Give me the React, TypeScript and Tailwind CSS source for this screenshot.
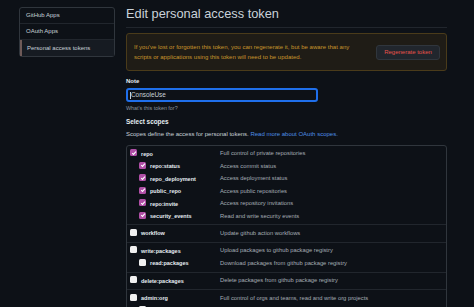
import React from "react";

type Scope = { name: string; desc: string; checked: boolean; child?: boolean };

const groups: Scope[][] = [
  [
    { name: "repo", desc: "Full control of private repositories", checked: true },
    { name: "repo:status", desc: "Access commit status", checked: true, child: true },
    { name: "repo_deployment", desc: "Access deployment status", checked: true, child: true },
    { name: "public_repo", desc: "Access public repositories", checked: true, child: true },
    { name: "repo:invite", desc: "Access repository invitations", checked: true, child: true },
    { name: "security_events", desc: "Read and write security events", checked: true, child: true },
  ],
  [{ name: "workflow", desc: "Update github action workflows", checked: false }],
  [
    { name: "write:packages", desc: "Upload packages to github package registry", checked: false },
    { name: "read:packages", desc: "Download packages from github package registry", checked: false, child: true },
  ],
  [{ name: "delete:packages", desc: "Delete packages from github package registry", checked: false }],
  [
    { name: "admin:org", desc: "Full control of orgs and teams, read and write org projects", checked: false },
    { name: "write:org", desc: "Read and write org and team membership, read and write org projects", checked: false, child: true },
    { name: "read:org", desc: "Read org and team membership, read org projects", checked: false, child: true },
  ],
];

function Box({ checked }: { checked: boolean }) {
  if (checked) {
    return (
      <span className="flex h-[7px] w-[7px] shrink-0 -translate-y-[1px] items-center justify-center rounded-[1.5px] bg-[#b04fa6]">
        <svg width="6" height="6" viewBox="0 0 10 10">
          <path d="M2 5.2 L4.2 7.4 L8.2 2.8" fill="none" stroke="#ffffff" strokeWidth="1.8" />
        </svg>
      </span>
    );
  }
  return <span className="h-[7px] w-[7px] shrink-0 -translate-y-[1px] rounded-[1.5px] bg-[#f0f0f0]" />;
}

export default function App() {
  return (
    <div
      className="h-[307px] w-[474px] overflow-hidden bg-[#0d1117] text-[#c9d1d9]"
      style={{ fontFamily: '"Liberation Sans", Arial, sans-serif' }}
    >
      <div className="flex gap-[11px] pl-[19px]">
        {/* sidebar */}
        <div className="mt-[7px] w-[96px] shrink-0 self-start rounded-[3px] border border-[#30363d] text-[6px]">
          <div className="flex h-[16px] items-center border-b border-[#21262d] px-[6px]">GitHub Apps</div>
          <div className="flex h-[16px] items-center border-b border-[#21262d] px-[6px]">OAuth Apps</div>
          <div className="flex h-[16px] items-center border-l-2 border-[#6e5a58] bg-[#161b22] pl-[5px] pr-[6px]">
            Personal access tokens
          </div>
        </div>

        {/* main */}
        <div className="flex w-[321px] flex-col">
          <div className="border-b border-[#21262d] pb-[5px] pt-[6px] text-[12.8px] leading-[16px] text-[#c9d1d9]">
            Edit personal access token
          </div>

          <div className="mt-[5px] flex h-[38px] items-center justify-between rounded-[3px] border border-[#4a3b1a] bg-[#1f1c16] pl-[7px] pr-[6px]">
            <div className="text-[6.05px] leading-[10px] text-[#c8952c]">
              <div>If you've lost or forgotten this token, you can regenerate it, but be aware that any</div>
              <div>scripts or applications using this token will need to be updated.</div>
            </div>
            <div className="flex h-[15px] w-[64px] items-center justify-center rounded-[3px] border border-[#30363d] bg-[#21262d] text-[6px] text-[#e5534b]">
              Regenerate token
            </div>
          </div>

          <div className="mt-[5px] text-[6px] font-bold leading-[10px] text-[#e6edf3]">Note</div>
          <div className="mt-[2px] flex h-[14px] w-[192px] items-center rounded-[3px] border-2 border-[#1f6feb] bg-[#0d1117] px-[2px] text-[6.4px] text-[#c9d1d9]">
            <span className="mr-[0.5px] h-[7px] w-[0.5px] bg-[#c9d1d9]" />
            ConsoleUse
          </div>
          <div className="mt-[2px] text-[5.4px] leading-[8px] text-[#8b949e]">What's this token for?</div>

          <div className="mt-[5px] text-[6.4px] font-bold leading-[10px] text-[#e6edf3]">Select scopes</div>
          <div className="mt-[2px] text-[6px] leading-[10px] text-[#c9d1d9]">
            Scopes define the access for personal tokens.{" "}
            <span className="text-[#4d8fe6]">Read more about OAuth scopes.</span>
          </div>

          <div className="mt-[6px] rounded-[3px] border border-[#30363d]">
            {groups.map((g, gi) => (
              <div key={gi} className={gi > 0 ? "border-t border-[#21262d] py-[2px]" : "py-[1.5px]"}>
                {g.map((s) => (
                  <div key={s.name} className="flex h-[12.5px] items-center">
                    <div className={`flex w-[93px] shrink-0 items-center ${s.child ? "pl-[12px]" : "pl-[3px]"}`}>
                      <Box checked={s.checked} />
                      <span className="ml-[4px] whitespace-nowrap text-[5.5px] font-bold text-[#e6edf3]">{s.name}</span>
                    </div>
                    <span className="whitespace-nowrap text-[5.8px] text-[#a5adb6]">{s.desc}</span>
                  </div>
                ))}
              </div>
            ))}
          </div>
        </div>
      </div>
    </div>
  );
}
